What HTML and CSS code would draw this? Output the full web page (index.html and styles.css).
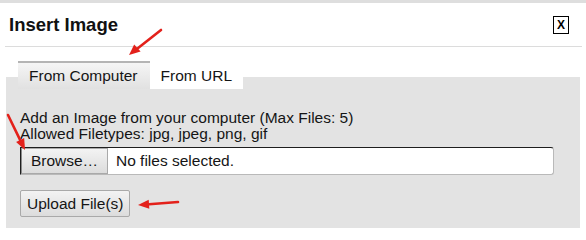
FILE: index.html
```html
<!DOCTYPE html>
<html lang="en">
<head>
<meta charset="utf-8">
<title>Insert Image</title>
<link rel="stylesheet" href="styles.css">
</head>
<body>
<div class="page">
  <div class="topbar"></div>
  <div class="header">
    <h1 class="title">Insert Image</h1>
    <span class="close">X</span>
  </div>
  <div class="body">
    <div class="tabs">
      <span class="tab tab-active">From Computer</span>
      <span class="tab">From URL</span>
    </div>
    <div class="panel">
      <p class="info">Add an Image from your computer (Max Files: 5)<br>Allowed Filetypes: jpg, jpeg, png, gif</p>
      <div class="filebox"><span class="browse">Browse…</span><span class="nofile">No files selected.</span></div>
      <button class="upload" type="button">Upload File(s)</button>
    </div>
  </div>
  <svg class="arrows" width="586" height="228" viewBox="0 0 586 228" xmlns="http://www.w3.org/2000/svg">
    <g stroke="#e3211b" stroke-width="2.6" stroke-linecap="round" fill="none">
      <line x1="161" y1="30" x2="137.5" y2="48.5"/>
      <line x1="8" y1="115" x2="20.2" y2="140.1"/>
      <line x1="178" y1="202" x2="149" y2="204.2"/>
    </g>
    <g fill="#e3211b">
      <polygon points="129,55 140.6,51.6 134.2,44.4"/>
      <polygon points="25,150 24.2,138.1 16.1,142.1"/>
      <polygon points="138,205 149.3,208.7 148.7,199.7"/>
    </g>
  </svg>
</div>
</body>
</html>
```

FILE: styles.css
```css
html, body {
  margin: 0;
  padding: 0;
  background: #ffffff;
}

body {
  font-family: "Liberation Sans", Arial, sans-serif;
  color: #151515;
  overflow: hidden;
}

.page {
  position: relative;
  width: 586px;
  height: 228px;
  overflow: hidden;
}

.topbar {
  height: 3px;
  background: #dedede;
}

.header {
  display: flex;
  justify-content: space-between;
  align-items: flex-start;
  margin: 0 4px 0 5px;
  padding: 11px 13px 11px 4px;
  border-bottom: 1px solid #dcdcdc;
}

.title {
  margin: 0;
  font-size: 18.5px;
  font-weight: bold;
  line-height: 21px;
  color: #111111;
}

.close {
  margin-top: 2px;
  width: 14px;
  height: 16px;
  border: 1px solid #000000;
  font-size: 12px;
  font-weight: bold;
  line-height: 16px;
  text-align: center;
  color: #000000;
}

.body {
  margin-left: 6px;
  width: 574px;
  padding-top: 14px;
}

.tabs {
  display: flex;
  margin-left: 12px;
  margin-bottom: -12px;
  position: relative;
  z-index: 1;
}

.tab {
  font-size: 15.5px;
  line-height: 16px;
  padding: 5px 11px;
  border-top: 2px solid transparent;
  background: #ffffff;
  color: #151515;
}

.tab-active {
  padding-right: 12px;
  background: linear-gradient(#f5f5f5, #e1e1e1);
  border-top-color: #b4b4b4;
}

.panel {
  background: #e3e3e3;
  padding: 33px 0 20px 14px;
}

.info {
  margin: 0;
  font-size: 15.5px;
  line-height: 16px;
  color: #151515;
}

.filebox {
  box-sizing: border-box;
  display: flex;
  margin-top: 5px;
  width: 534px;
  height: 28px;
  border: 1px solid;
  border-color: #1e1e1e #b9b9b9 #b9b9b9 #1e1e1e;
  border-radius: 0 3px 3px 0;
  background: #ffffff;
  font-size: 15.5px;
  line-height: 26px;
}

.browse {
  box-sizing: border-box;
  width: 87px;
  height: 26px;
  border: 1px solid #a9a9a9;
  border-left-color: #8a8a8a;
  background: linear-gradient(#f3f3f3, #dcdcdc);
  text-align: center;
  line-height: 24px;
}

.nofile {
  padding-left: 8px;
}

.upload {
  display: block;
  margin-top: 15px;
  height: 27px;
  padding: 0 6px;
  border: 1px solid #a9a9a9;
  border-radius: 2px;
  background: linear-gradient(#f3f3f3, #dcdcdc);
  font-family: "Liberation Sans", Arial, sans-serif;
  font-size: 15.5px;
  line-height: 25px;
  color: #151515;
}

.arrows {
  position: absolute;
  top: 0;
  left: 0;
  pointer-events: none;
}
```
